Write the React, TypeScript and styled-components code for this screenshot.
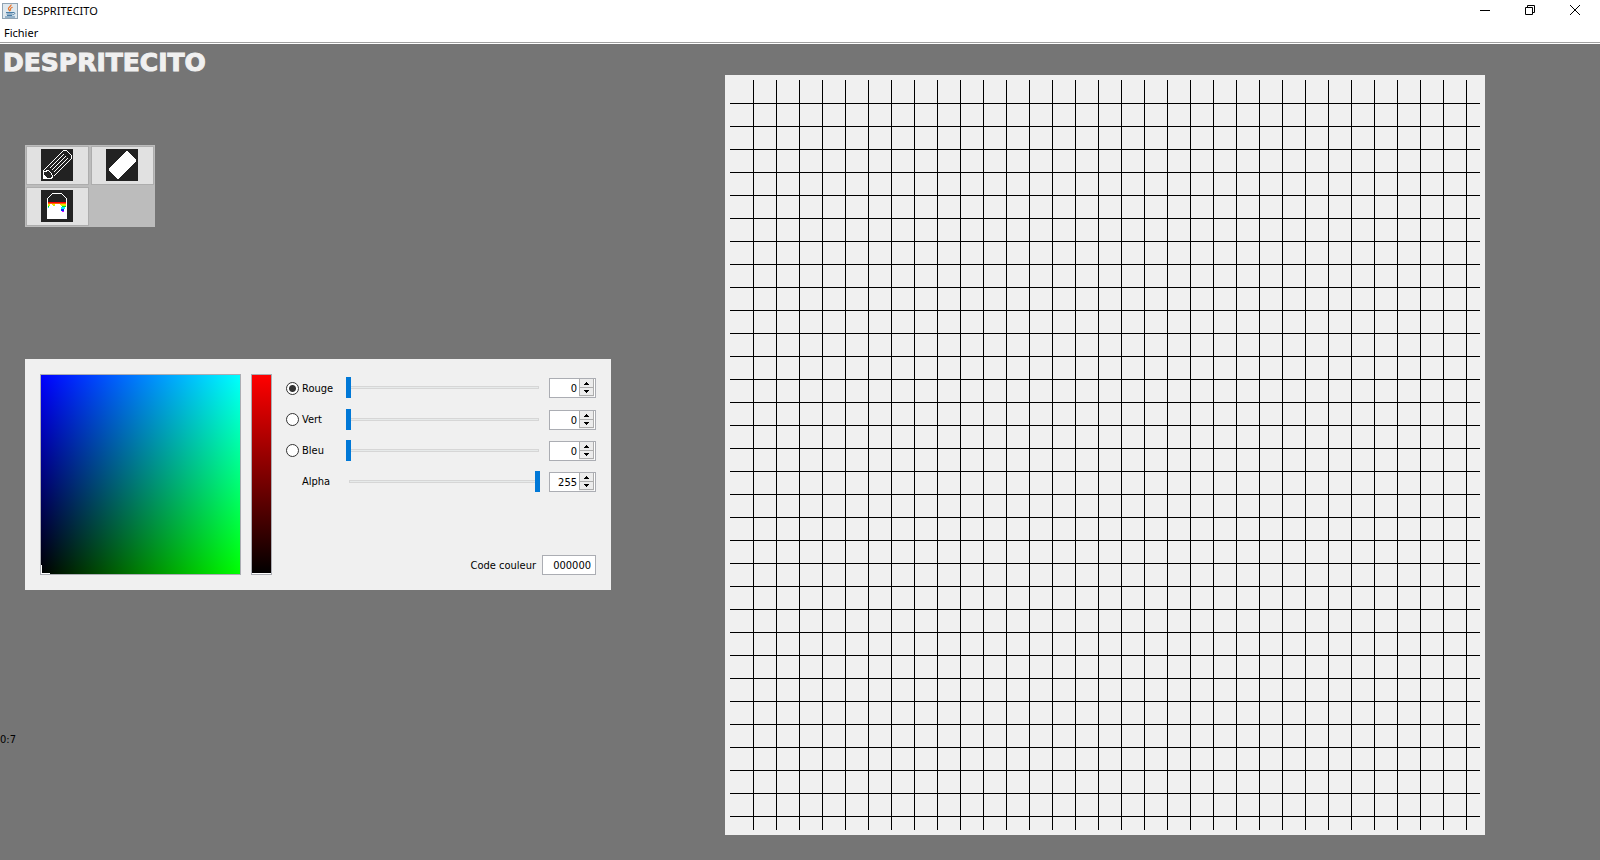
import React, { useState } from 'react';
import styled, { createGlobalStyle } from 'styled-components';

const GlobalStyle = createGlobalStyle`
  * { box-sizing: border-box; }
  body {
    margin: 0;
    background: #757575;
    color: #000;
    font-family: 'DejaVu Sans Condensed', 'DejaVu Sans', sans-serif;
    font-size: 11px;
  }
  button, input { font: inherit; color: inherit; margin: 0; }
`;

const Page = styled.div`
  min-height: 100vh;
  display: flex;
  flex-direction: column;
  overflow: hidden;
`;

const TitleBar = styled.header`
  display: flex;
  align-items: center;
  height: 22px;
  padding: 0 3px 0 2px;
  gap: 5px;
  background: #fff;
  font-family: 'Noto Sans', sans-serif;
`;

const WindowTitle = styled.span`
  flex: 1;
  font-size: 11px;
  line-height: 22px;
`;

const WindowButtons = styled.div`
  display: flex;
  align-self: flex-start;
`;

const WindowButton = styled.button`
  display: grid;
  place-items: center;
  width: 45px;
  height: 20px;
  padding: 0;
  border: 0;
  background: none;
`;

const MenuBar = styled.nav`
  height: 22px;
  padding: 0 4px;
  background: #fff;
  box-shadow: inset 0 -1px #fff, inset 0 -2px #a0a0a0;
`;

const MenuButton = styled.button`
  padding: 0;
  border: 0;
  background: none;
  font-family: 'Noto Sans', sans-serif;
  font-size: 11px;
  line-height: 22px;
`;

const Workspace = styled.main`
  flex: 1;
  display: grid;
  grid-template-columns: minmax(611px, 1fr) 760px;
  align-items: start;
  padding-right: 115px;
`;

const SidePane = styled.section`
  display: flex;
  flex-direction: column;
  align-items: flex-start;
`;

const Heading = styled.h1`
  margin: 0 0 63px;
  padding: 0 3px;
  color: #f0f0f0;
  font-family: 'DejaVu Sans', sans-serif;
  font-size: 25px;
  font-weight: 700;
  line-height: 38px;
  -webkit-text-stroke: 1px #f0f0f0;
`;

const Toolbox = styled.div`
  display: grid;
  grid-template-columns: repeat(2, 63px);
  grid-auto-rows: 39px;
  gap: 2px;
  margin: 0 25px 132px;
  padding: 1px;
  background: #bcbcbc;
`;

const ToolButton = styled.button`
  display: flex;
  align-items: flex-start;
  padding: 2px 14px;
  border: 1px solid #adadad;
  background: #e1e1e1;
`;

const Picker = styled.form`
  display: flex;
  width: 586px;
  margin: 0 0 140px 25px;
  padding: 15px;
  background: #f0f0f0;
`;

const ColorSquare = styled.div`
  position: relative;
  width: 201px;
  height: 201px;
  margin-right: 10px;
  border: 1px solid #abadb3;
  background:
    linear-gradient(to right, #000, #0f0),
    linear-gradient(to top, #000, #00f);
  background-blend-mode: screen;
`;

const SquareCursor = styled.span`
  position: absolute;
  left: 0;
  bottom: 0;
  width: 9px;
  height: 9px;
  border: solid #fff;
  border-width: 0 0 1px 1px;
`;

const ColorStrip = styled.div`
  display: flex;
  align-items: flex-end;
  width: 21px;
  height: 201px;
  margin-right: 14px;
  border: 1px solid #abadb3;
  background: linear-gradient(to top, #000, #f00);
`;

const StripMarker = styled.span`
  width: 100%;
  height: 1px;
  background: #fff;
`;

const Controls = styled.div`
  flex: 1;
  display: flex;
  flex-direction: column;
  justify-content: space-between;
  padding-top: 3px;
`;

const Channels = styled.div`
  display: grid;
  grid-template-columns: 60px 1fr 47px;
  grid-template-rows: 22px repeat(3, 21px);
  row-gap: 10px;
  align-items: start;
`;

const ChannelLabel = styled.label<{ $indent?: boolean }>`
  display: flex;
  align-items: center;
  align-self: end;
  gap: 3px;
  height: 21px;
  padding-left: ${(p) => (p.$indent ? 16 : 0)}px;
`;

const Radio = styled.input`
  appearance: none;
  width: 13px;
  height: 13px;
  border: 1px solid #333;
  border-radius: 50%;
  background: #fff;
  &:checked {
    background: radial-gradient(circle, #333 3px, #fff 4px);
  }
`;

const Slider = styled.input`
  appearance: none;
  width: 194px;
  height: 21px;
  background: none;
  &::-webkit-slider-runnable-track {
    height: 21px;
    background:
      linear-gradient(#e7eaea, #e7eaea) 4px 10px / 188px 1px no-repeat,
      linear-gradient(#d6d6d6, #d6d6d6) 3px 9px / 190px 3px no-repeat;
  }
  &::-webkit-slider-thumb {
    appearance: none;
    width: 5px;
    height: 21px;
    background: #0078d7;
  }
`;

const Spinner = styled.div`
  display: flex;
  height: 20px;
  margin-top: 1px;
  padding-right: 1px;
  border: 1px solid #abadb3;
  background: #fff;
`;

const SpinnerInput = styled.input`
  flex: 1;
  min-width: 0;
  padding: 0 2px 0 0;
  border: 0;
  background: none;
  text-align: right;
`;

const SpinnerArrows = styled.div`
  display: grid;
  grid-template-rows: 9px 8px;
  width: 15px;
  background: #f0f0f0;
`;

const ArrowButton = styled.button`
  display: grid;
  place-items: center;
  padding: 0;
  border: solid #adadad;
  border-width: 0 1px 1px;
  background: #ececec;
`;

const CodeRow = styled.label`
  display: flex;
  align-items: center;
  justify-content: flex-end;
  gap: 6px;
`;

const CodeInput = styled.input`
  width: 54px;
  height: 20px;
  padding: 0 4px;
  border: 1px solid #abadb3;
  background: #fff;
  text-align: right;
`;

const Status = styled.output`
  line-height: 20px;
`;

const Canvas = styled.div`
  margin: 31px 0 25px;
  padding: 5px;
  background: #f0f0f0;
  svg { display: block; width: 100%; }
`;

const JavaIcon = () => (
  <svg width="16" height="16" viewBox="0 0 16 16" aria-hidden="true">
    <rect x="0.5" y="0.5" width="15" height="15" fill="#dfe8ee" stroke="#8fa3b3" />
    <path d="M9 1.500c1 1.600-3 2.800-2.600 4.400.2.900 1.200 1.500 1.600 2.300M10.600 4.200C9 5 7.600 5.600 8.700 7.600" fill="none" stroke="#e8762c" strokeWidth="1.200" />
    <path d="M4 9.500h7M4.500 11h6M5 12.500h5M3 14h10M11 9.500c2.500-.6 2.500 2-.5 2.300" fill="none" stroke="#4a7da5" strokeWidth="1" />
  </svg>
);

const PencilIcon = () => (
  <svg width="32" height="32" viewBox="0 0 32 32" shapeRendering="crispEdges" aria-hidden="true">
    <rect width="32" height="32" fill="#222" />
    <path d="M2.500 29.500V21.500L22.500 1.500H25.500L30.500 6.500V9.500L12.500 27.500L9.500 29.500Z" fill="none" stroke="#fff" strokeWidth="1.400" />
    <path d="M3.500 22.500L7.500 21.500L10.500 24.500L11.500 27.500" fill="none" stroke="#fff" />
    <path d="M8.500 19.500L22.500 5.500M10.500 21.500L24.500 7.500M12.500 23.500L26.500 9.500" fill="none" stroke="#fff" />
    <path d="M2 26h2v1h1v1h1v2H2z" fill="#fff" />
  </svg>
);

const EraserIcon = () => (
  <svg width="32" height="32" viewBox="0 0 32 32" shapeRendering="crispEdges" aria-hidden="true">
    <rect width="32" height="32" fill="#222" />
    <path d="M20.500 2H22L30 10.500V13L12.500 30H11L3 22V20Z" fill="#fff" />
  </svg>
);

const BucketIcon = () => (
  <svg width="32" height="32" viewBox="0 0 32 32" shapeRendering="crispEdges" aria-hidden="true">
    <rect width="32" height="32" fill="#222" />
    <path d="M6.500 29V8.500L11.500 3.500H20.500L25.500 8.500V29" fill="none" stroke="#fff" />
    <path d="M6 14h20v15H6z" fill="#fff" />
    <path d="M7 12h18v1H7z" fill="#f00" />
    <path d="M7 13h18v1H7z" fill="#ff6a00" />
    <path d="M7 14h2v1H7zM11 14h3v1h-3zM19 14h6v1h-6z" fill="#ffd800" />
    <path d="M7 15h2v1H7zM12 15h2v1h-2zM20 15h5v1h-5z" fill="#b6ff00" />
    <path d="M7 16h1v1H7zM21 16h4v1h-4z" fill="#00e01c" />
    <path d="M7 17h1v1H7zM20 17h4v2h-4z" fill="#00e8ff" />
    <path d="M20 19h3v2h-3z" fill="#0026ff" />
    <path d="M21 21h2v1h-2z" fill="#d800ff" />
  </svg>
);

const Arrow = ({ up }: { up?: boolean }) => (
  <svg width="5" height="3" viewBox="0 0 5 3" shapeRendering="crispEdges" aria-hidden="true">
    <path d={up ? 'M2 0h1v1h1v1h1v1H0V2h1V1h1z' : 'M0 0h5v1H4v1H3v1H2V2H1V1H0z'} />
  </svg>
);

const tools = [
  { name: 'Crayon', Icon: PencilIcon },
  { name: 'Gomme', Icon: EraserIcon },
  { name: 'Remplissage', Icon: BucketIcon },
];

const channels = ['Rouge', 'Vert', 'Bleu', 'Alpha'];
const CELL = 23;
const GRID = 750;
const gridLines = Array.from({ length: 32 }, (_, i) => (i + 1) * CELL);

export default function App() {
  const [active, setActive] = useState('Rouge');
  const [values, setValues] = useState([0, 0, 0, 255]);

  const change = (index: number, value: number) => {
    const next = Math.max(0, Math.min(255, value || 0));
    setValues((all) => all.map((v, i) => (i === index ? next : v)));
  };

  const code = values.slice(0, 3).map((v) => v.toString(16).padStart(2, '0')).join('');

  return (
    <Page>
      <GlobalStyle />
      <TitleBar>
        <JavaIcon />
        <WindowTitle>DESPRITECITO</WindowTitle>
        <WindowButtons>
          <WindowButton aria-label="Réduire">
            <svg width="10" height="10"><path d="M0 5h10v1H0z" /></svg>
          </WindowButton>
          <WindowButton aria-label="Restaurer">
            <svg width="10" height="10" fill="none" stroke="#000">
              <path d="M0.500 2.500h7v7h-7zM2.500 2.500v-2h7v7h-2" />
            </svg>
          </WindowButton>
          <WindowButton aria-label="Fermer">
            <svg width="10" height="10" stroke="#000"><path d="M0 0L10 10M10 0L0 10" /></svg>
          </WindowButton>
        </WindowButtons>
      </TitleBar>
      <MenuBar>
        <MenuButton>Fichier</MenuButton>
      </MenuBar>
      <Workspace>
        <SidePane>
          <Heading>DESPRITECITO</Heading>
          <Toolbox>
            {tools.map(({ name, Icon }) => (
              <ToolButton key={name} aria-label={name}>
                <Icon />
              </ToolButton>
            ))}
          </Toolbox>
          <Picker onSubmit={(e) => e.preventDefault()}>
            <ColorSquare>
              <SquareCursor />
            </ColorSquare>
            <ColorStrip>
              <StripMarker />
            </ColorStrip>
            <Controls>
              <Channels>
                {channels.map((name, i) => (
                  <React.Fragment key={name}>
                    {name === 'Alpha' ? (
                      <ChannelLabel $indent htmlFor="slider-Alpha">{name}</ChannelLabel>
                    ) : (
                      <ChannelLabel>
                        <Radio
                          type="radio"
                          name="channel"
                          checked={active === name}
                          onChange={() => setActive(name)}
                        />
                        {name}
                      </ChannelLabel>
                    )}
                    <Slider
                      id={`slider-${name}`}
                      type="range"
                      min={0}
                      max={255}
                      aria-label={name}
                      value={values[i]}
                      onChange={(e) => change(i, Number(e.target.value))}
                    />
                    <Spinner>
                      <SpinnerInput
                        type="text"
                        aria-label={`Valeur ${name}`}
                        value={values[i]}
                        onChange={(e) => change(i, Number(e.target.value))}
                      />
                      <SpinnerArrows>
                        <ArrowButton type="button" aria-label="Augmenter" onClick={() => change(i, values[i] + 1)}>
                          <Arrow up />
                        </ArrowButton>
                        <ArrowButton type="button" aria-label="Diminuer" onClick={() => change(i, values[i] - 1)}>
                          <Arrow />
                        </ArrowButton>
                      </SpinnerArrows>
                    </Spinner>
                  </React.Fragment>
                ))}
              </Channels>
              <CodeRow>
                Code couleur
                <CodeInput type="text" value={code} readOnly />
              </CodeRow>
            </Controls>
          </Picker>
          <Status>0:7</Status>
        </SidePane>
        <Canvas>
          <svg viewBox={`0 0 ${GRID} ${GRID}`} shapeRendering="crispEdges" role="img" aria-label="Grille de dessin">
            {gridLines.map((p) => (
              <path key={p} d={`M${p} 0h1v${GRID}h-1zM0 ${p}h${GRID}v1H0z`} />
            ))}
          </svg>
        </Canvas>
      </Workspace>
    </Page>
  );
}
